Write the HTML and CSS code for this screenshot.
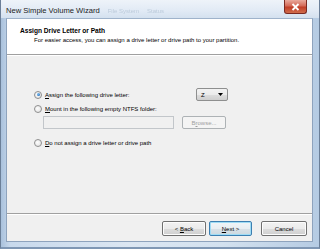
FILE: index.html
```html
<!DOCTYPE html>
<html lang="en">
<head>
    <meta charset="UTF-8">
    <title>New Simple Volume Wizard</title>
    <link rel="stylesheet" href="styles.css">
</head>
<body>

<div class="window">
    <div class="titlebar">
        <span class="title">New Simple Volume Wizard</span>
        <span class="ghost">File System</span>
        <span class="ghost">Status</span>
        <button class="close">
            <svg width="9" height="8" viewBox="0 0 9 8">
                <path d="M1.5 1 L7.5 7 M7.5 1 L1.5 7" stroke="#fff" stroke-width="1.8" fill="none"/>
            </svg>
        </button>
    </div>

    <div class="client">
        <div class="header">
            <h1>Assign Drive Letter or Path</h1>
            <p>For easier access, you can assign a drive letter or drive path to your partition.</p>
        </div>

        <div class="content">
            <div class="row first">
                <label class="option wide">
                    <span class="radio checked"></span>
                    <span><u>A</u>ssign the following drive letter:</span>
                </label>
                <div class="combo">
                    <span>Z</span>
                    <svg width="5" height="3" viewBox="0 0 5 3"><path d="M0 0 H5 L2.5 3 Z" fill="#000"/></svg>
                </div>
            </div>

            <div class="row">
                <label class="option">
                    <span class="radio"></span>
                    <span><u>M</u>ount in the following empty NTFS folder:</span>
                </label>
            </div>

            <div class="row folder">
                <div class="textbox"></div>
                <button class="btn disabled">B<u>r</u>owse...</button>
            </div>

            <div class="row last">
                <label class="option">
                    <span class="radio"></span>
                    <span><u>D</u>o not assign a drive letter or drive path</span>
                </label>
            </div>
        </div>

        <div class="footer">
            <button class="btn">&lt; <u>B</u>ack</button>
            <button class="btn default"><u>N</u>ext &gt;</button>
            <button class="btn cancel">Cancel</button>
        </div>
    </div>
</div>

</body>
</html>
```

FILE: styles.css
```css
body {
    margin: 0;
    padding: 0;
    width: 320px;
    height: 249px;
    overflow: hidden;
    font-family: "Liberation Sans", Arial, sans-serif;
    font-size: 6px;
    color: #000;
}

.window {
    width: 320px;
    height: 249px;
    box-sizing: border-box;
    padding: 0 6px 5px 5px;
    display: flex;
    flex-direction: column;
    background: linear-gradient(90deg, #a9c1dc 0%, #c8d9ec 3%, #dbe6f2 40%, #d3e1ef 70%, #b5cbe3 100%);
    border: 1px solid #6b7f98;
    border-top: none;
    border-bottom: 2px solid #7f97b4;
}

.titlebar {
    height: 18px;
    display: flex;
    align-items: center;
    gap: 8px;
    position: relative;
    margin: 0 -6px 0 -5px;
    padding-left: 5px;
    background: linear-gradient(180deg, #eef3f9 0%, #e1eaf5 60%, #d4e1ef 100%);
}

.title {
    font-family: "Liberation Sans", Arial, sans-serif;
    font-size: 7.6px;
    color: #1b1b1b;
    margin-top: 2px;
}

.ghost {
    font-size: 6px;
    color: #bccbdb;
    filter: blur(0.6px);
    margin-top: 3px;
}

.close {
    position: absolute;
    top: 0;
    right: 12px;
    width: 23px;
    height: 14px;
    padding: 0;
    border: 1px solid #7a2a22;
    border-top: none;
    border-radius: 0 0 3px 3px;
    background: linear-gradient(180deg, #e9a99c 0%, #d46a58 45%, #c13e28 55%, #d06d4c 100%);
    display: flex;
    align-items: center;
    justify-content: center;
}

.client {
    flex: 1;
    display: flex;
    flex-direction: column;
    background-color: #f0f0f0;
    border: 1px solid #8ea3bd;
    border-top-color: #9fb3cb;
}

.header {
    height: 36px;
    box-sizing: border-box;
    background-color: #fff;
    border-bottom: 1px solid #a0a0a0;
    box-shadow: 0 1px 0 #fff;
    padding: 8px 0 0 13px;
}

.header h1 {
    margin: 0;
    font-size: 6.6px;
    font-weight: bold;
    line-height: 8px;
}

.header p {
    margin: 1px 0 0 14px;
    font-size: 6px;
    line-height: 8px;
}

.content {
    flex: 1;
    padding: 33px 0 0 27px;
}

.row {
    display: flex;
    align-items: center;
    height: 12px;
}

.row.first {
    height: 13px;
}

.row + .row {
    margin-top: 2px;
}

.row.folder {
    height: 13px;
    padding-left: 9px;
    gap: 8px;
    margin-top: 1px;
}

.row.last {
    margin-top: 8px;
}

.option {
    display: flex;
    align-items: center;
    gap: 3px;
    white-space: nowrap;
}

.option.wide {
    width: 162px;
}

.radio {
    width: 6px;
    height: 6px;
    border-radius: 50%;
    border: 1px solid #8f8f8f;
    background: radial-gradient(circle at 40% 40%, #fdfdfd 0%, #e4e4e4 80%);
    position: relative;
}

.radio.checked::after {
    content: "";
    position: absolute;
    left: 1.5px;
    top: 1.5px;
    width: 3px;
    height: 3px;
    border-radius: 50%;
    background: radial-gradient(circle at 35% 35%, #7fc3f2 0%, #1a62b6 90%);
}

u {
    text-decoration: underline;
    text-underline-offset: 1px;
}

.combo {
    width: 32px;
    height: 13px;
    box-sizing: border-box;
    border: 1px solid #8e8f8f;
    border-radius: 2px;
    background: linear-gradient(180deg, #f2f2f2 0%, #ebebeb 50%, #dddddd 51%, #cfcfcf 100%);
    display: flex;
    align-items: center;
    justify-content: space-between;
    padding: 0 4px 0 4px;
    font-size: 6px;
}

.textbox {
    width: 131px;
    height: 13px;
    box-sizing: border-box;
    border: 1px solid #c2c6ca;
    background-color: #f0f0f0;
}

.btn {
    height: 15px;
    box-sizing: border-box;
    padding: 0;
    font-family: "Liberation Sans", Arial, sans-serif;
    font-size: 6px;
    color: #000;
    border: 1px solid #707070;
    border-radius: 2px;
    background: linear-gradient(180deg, #f2f2f2 0%, #ebebeb 50%, #dddddd 51%, #cfcfcf 100%);
    box-shadow: inset 0 0 0 1px #fcfcfc;
}

.btn.disabled {
    width: 44px;
    height: 13px;
    color: #a0a0a0;
    border-color: #adb2b5;
    background: #f4f4f4;
    box-shadow: none;
}

.footer {
    height: 28px;
    box-sizing: border-box;
    border-top: 1px solid #a0a0a0;
    box-shadow: inset 0 1px 0 #fff;
    display: flex;
    justify-content: flex-end;
    padding: 7px 5px 0 0;
    gap: 3px;
}

.footer .btn {
    width: 44px;
}

.btn.default {
    width: 43px;
    border-color: #3c7fb1;
    box-shadow: inset 0 0 0 1px #9fdcf5;
    background: linear-gradient(180deg, #f0f5f8 0%, #e8eef2 50%, #d9e2e8 51%, #ccd8df 100%);
}

.btn.cancel {
    width: 46px;
    margin-left: 6px;
}
```
